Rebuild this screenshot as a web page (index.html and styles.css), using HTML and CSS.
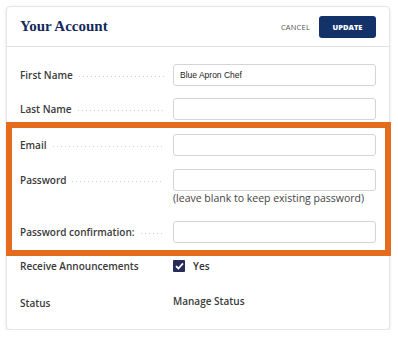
FILE: index.html
```html
<!DOCTYPE html>
<html lang="en">
<head>
    <meta charset="UTF-8">
    <meta name="viewport" content="width=device-width, initial-scale=1.0">
    <link rel="stylesheet" href="styles.css">
    <title>Your Account</title>
</head>
<body>
  <div class="account-card">
    <div class="account-header">
      <h1 class="account-title">Your Account</h1>
      <div class="header-actions">
        <button class="cancel-button">CANCEL</button>
        <button class="update-button">UPDATE</button>
      </div>
    </div>

    <div class="account-form">
      <div class="form-row">
        <label class="form-label"><span>First Name</span><i class="leader"></i></label>
        <div class="form-field"><input type="text" class="text-input" value="Blue Apron Chef"></div>
      </div>
      <div class="form-row">
        <label class="form-label"><span>Last Name</span><i class="leader"></i></label>
        <div class="form-field"><input type="text" class="text-input"></div>
      </div>

      <!-- highlighted block -->
      <div class="highlight-box">
        <div class="form-row">
          <label class="form-label"><span>Email</span><i class="leader"></i></label>
          <div class="form-field"><input type="text" class="text-input"></div>
        </div>
        <div class="form-row">
          <label class="form-label"><span>Password</span><i class="leader"></i></label>
          <div class="form-field">
            <input type="password" class="text-input">
            <div class="field-hint">(leave blank to keep existing password)</div>
          </div>
        </div>
        <div class="form-row last">
          <label class="form-label"><span>Password confirmation:</span><i class="leader"></i></label>
          <div class="form-field"><input type="password" class="text-input"></div>
        </div>
      </div>

      <div class="form-row plain announce-row">
        <div class="form-label"><span>Receive Announcements</span></div>
        <div class="form-field check-field">
          <span class="checkbox">
            <svg width="9" height="8" viewBox="0 0 9 8"><path d="M1 4.2 L3.4 6.5 L8 1.3" fill="none" stroke="#fff" stroke-width="1.8"/></svg>
          </span>
          <span>Yes</span>
        </div>
      </div>
      <div class="form-row plain status-row">
        <div class="form-label status-label"><span>Status</span></div>
        <div class="form-field">Manage Status</div>
      </div>
    </div>
  </div>
</body>
</html>
```

FILE: styles.css
```css
body {
    margin: 0;
    padding: 0;
    background-color: #fff;
    font-family: "Open Sans", Arial, sans-serif;
    color: #333;
}

.account-card {
    width: 382px;
    height: 322px;
    margin: 6px 0 0 6px;
    border: 1px solid #e6e6e6;
    border-radius: 4px;
    box-shadow: 0px 1px 3px rgba(0, 0, 0, 0.12);
    background-color: #fff;
}

.account-header {
    display: flex;
    align-items: center;
    justify-content: space-between;
    height: 39px;
    padding: 0 13px;
    border-bottom: 1px solid #e2e2e2;
}

.account-title {
    margin: 0;
    font-family: "Liberation Serif", "DejaVu Serif", serif;
    font-size: 15px;
    font-weight: bold;
    color: #15295b;
}

.header-actions {
    display: flex;
    align-items: center;
}

.cancel-button {
    background: none;
    border: none;
    padding: 0;
    margin-right: 9px;
    font-family: "Open Sans", Arial, sans-serif;
    font-size: 7.5px;
    letter-spacing: 0.2px;
    color: #555;
    cursor: pointer;
}

.update-button {
    width: 57px;
    height: 22px;
    background-color: #14326a;
    color: #fff;
    border: none;
    border-radius: 3px;
    font-family: "Open Sans", Arial, sans-serif;
    font-size: 7.5px;
    font-weight: 800;
    cursor: pointer;
}

.account-form {
    padding: 17px 13px 0 13px;
}

.form-row {
    display: grid;
    grid-template-columns: 153px 1fr;
    align-items: start;
    margin-bottom: 12px;
}

.form-row.last {
    margin-bottom: 0;
}

.form-label {
    display: flex;
    align-items: center;
    height: 22px;
    padding-right: 9px;
    font-size: 10px;
    font-weight: 600;
    color: #3a3a3a;
    white-space: nowrap;
}

.leader {
    flex: 1;
    height: 1px;
    margin: 2px 0 0 6px;
    background: linear-gradient(to right, #cfcfcf 1px, transparent 1px) 0 0 / 4px 1px repeat-x;
}

.text-input {
    box-sizing: border-box;
    display: block;
    width: 100%;
    height: 22px;
    padding: 0 6px;
    border: 1px solid #d5d5d5;
    border-radius: 3px;
    font-family: Arial, "Liberation Sans", sans-serif;
    font-size: 8.5px;
    color: #222;
}

.field-hint {
    margin: 0 0 3px 0;
    font-size: 10.5px;
    line-height: 14px;
    color: #444;
}

.highlight-box {
    margin: -10px -15px 0 -14px;
    padding: 6px 9px 7px 8px;
    border: 6px solid #e56c1f;
}

.highlight-box .form-row {
    margin-bottom: 13px;
}

.highlight-box .form-row.last {
    margin-bottom: 0;
}

.form-row.plain {
    align-items: center;
}

.form-row.plain .form-label {
    height: 16px;
}

.announce-row {
    margin-top: 2px;
    margin-bottom: 16px;
}

.check-field {
    display: flex;
    align-items: center;
    font-size: 10px;
    font-weight: 600;
}

.checkbox {
    display: flex;
    align-items: center;
    justify-content: center;
    width: 12px;
    height: 12px;
    margin-right: 8px;
    background-color: #272b5c;
    border-radius: 1px;
}

.status-row .form-field {
    font-size: 10px;
    font-weight: 600;
    color: #3a3a3a;
}

.status-label {
    margin-top: 5px;
}
```
